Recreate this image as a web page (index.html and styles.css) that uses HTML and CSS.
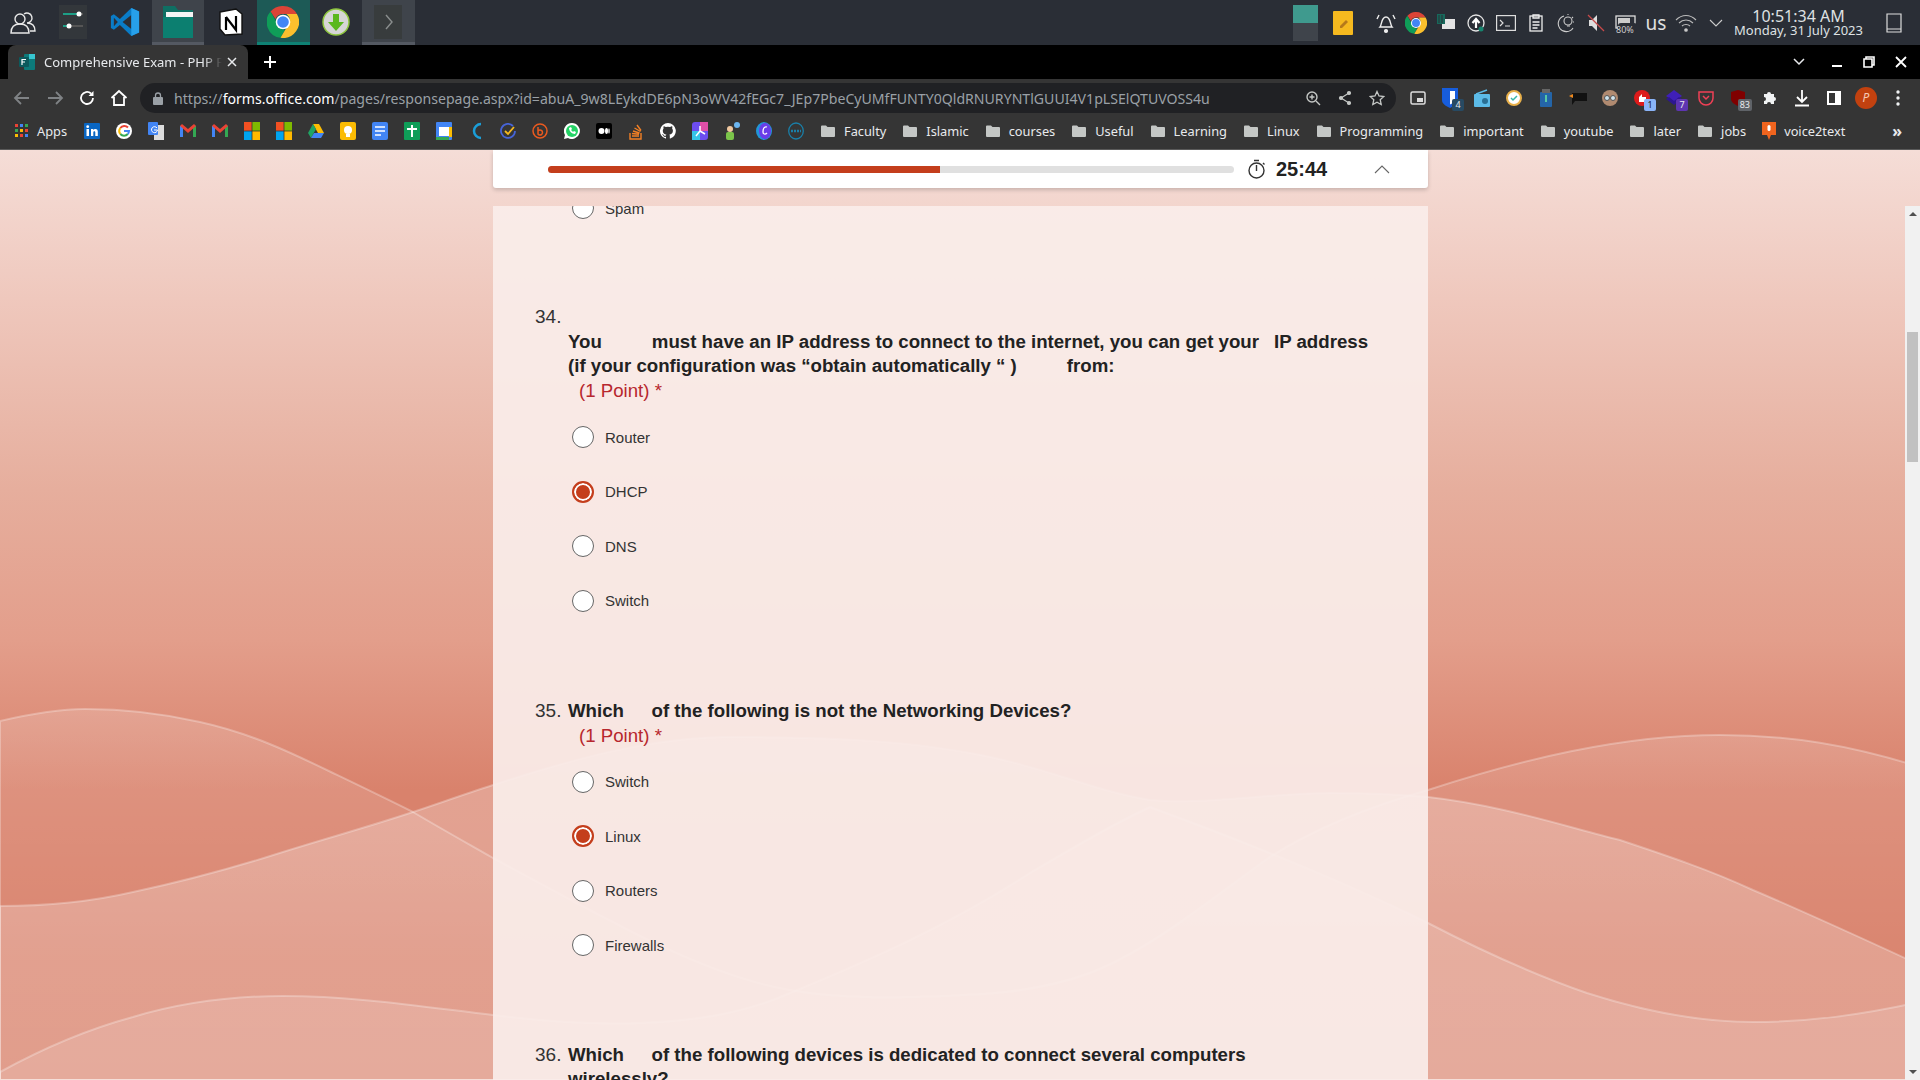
FILE: index.html
```html
<!DOCTYPE html>
<html lang="en">
<head>
    <meta charset="UTF-8">
    <title>Comprehensive Exam - PHP Forms</title>
    <link rel="stylesheet" href="styles.css">
</head>
<body>
    <svg class="defs" width="0" height="0">
        <symbol id="folder" viewBox="0 0 16 16"><path d="M1 3.5a1 1 0 0 1 1-1h4l1.5 1.5H14a1 1 0 0 1 1 1v8a1 1 0 0 1-1 1H2a1 1 0 0 1-1-1z" fill="#c4c7c5"/></symbol>
    </svg>

    <!-- desktop panel -->
    <div class="panel">
        <div class="launcher">
            <div class="task task-first"><svg width="28" height="28" viewBox="0 0 28 28" fill="none" stroke="#e8e8e8" stroke-width="1.4"><circle cx="11" cy="11" r="5"/><path d="M2 25c0-7 4-9 9-9s9 2 9 9z"/><path d="M15 6a5 5 0 1 1 3 9c4 0 8 2 8 8h-5"/></svg></div>
            <div class="task"><svg width="28" height="34" viewBox="0 0 28 34"><rect width="28" height="34" fill="#33373b"/><path d="M4 9h20M4 21h20" stroke="#555" stroke-width="2"/><path d="M4 9h14M4 21h6" stroke="#1d9e86" stroke-width="2"/><circle cx="20" cy="9" r="2.5" fill="#fff"/><circle cx="10" cy="21" r="2.5" fill="#fff"/></svg></div>
            <div class="task"><svg width="30" height="34" viewBox="0 0 100 100"><path d="M71 3 33 40 13 24 3 30v40l10 6 20-16 38 37 26-12V15z" fill="#0a7cc7"/><path d="M71 27 42 50l29 23z" fill="#2c2f36"/><path d="M71 3l26 12v70L71 97z" fill="#27a0ea"/><path d="M13 36 26 50 13 64z" fill="#2c2f36"/></svg></div>
            <div class="task task-on"><svg width="30" height="32" viewBox="0 0 30 32"><path d="M0 0h12l3 4h15v28H0z" fill="#0f6f63"/><rect x="3" y="6" width="27" height="5" fill="#f4f4f4"/><rect y="11" width="30" height="21" fill="#0c7f70"/></svg></div>
            <div class="task"><svg width="26" height="28" viewBox="0 0 26 28"><path d="M2 4 18 1l6 5v20L7 27 2 21z" fill="#fff" stroke="#111" stroke-width="1.4"/><path d="M8 9v13M8 9l10 13V8" fill="none" stroke="#000" stroke-width="2.2"/></svg></div>
            <div class="task task-chrome"><svg width="32" height="32" viewBox="0 0 32 32"><use href="#chrome-logo"/></svg></div>
            <div class="task"><svg width="28" height="28" viewBox="0 0 28 28"><circle cx="14" cy="14" r="13" fill="#d6d6d6" stroke="#8ec63f" stroke-width="1.5"/><path d="M11 6h6v8h5l-8 9-8-9h5z" fill="#5ab81d"/></svg></div>
            <div class="task task-on"><svg width="28" height="34" viewBox="0 0 28 34"><rect width="28" height="34" fill="#383c3d"/><path d="M12 10l6 7-6 7" fill="none" stroke="#8a8e8e" stroke-width="1.4"/></svg></div>
        </div>
        <div class="tray">
            <div class="pager"><span class="pager-on"></span><span></span></div>
            <svg class="tray-note" width="20" height="24" viewBox="0 0 20 24"><rect width="20" height="24" rx="1" fill="#f5b91f"/><path d="M7 15l6-6 2 2-6 6H7z" fill="#b5791a"/></svg>
            <div class="tray-slot"><svg width="20" height="22" viewBox="0 0 20 22" fill="none" stroke="#eee" stroke-width="1.4"><path d="M4 15c2-2 1-10 6-10s4 8 6 10z"/><circle cx="10" cy="19" r="1.4" fill="#eee"/><path d="M3 3 1 7M17 3l2 4"/></svg></div>
            <div class="tray-slot"><svg width="22" height="22" viewBox="0 0 32 32"><use href="#chrome-logo"/></svg></div>
            <div class="tray-slot"><svg width="18" height="18" viewBox="0 0 18 18"><rect x="5" y="5" width="13" height="10" fill="#e4e4e4"/><rect width="8" height="10" fill="#17685b"/><path d="M2 1v8M5 1v8" stroke="#2a2e36"/></svg></div>
            <div class="tray-slot"><svg width="18" height="20" viewBox="0 0 18 20" fill="none"><circle cx="9" cy="10" r="8" stroke="#e4e4e4" stroke-width="1.3"/><path d="M9 15V7M5.5 10 9 6l3.500 4" stroke="#fff" stroke-width="2.200"/><circle cx="14" cy="16" r="2.500" fill="#17856f"/></svg></div>
            <div class="tray-slot"><svg width="20" height="16" viewBox="0 0 20 16" fill="none" stroke="#ddd" stroke-width="1.200"><rect x=".6" y=".6" width="18.800" height="14.800"/><path d="M4 5l3 3-3 3M9 11h5"/></svg></div>
            <div class="tray-slot"><svg width="14" height="18" viewBox="0 0 14 18" fill="none" stroke="#eee" stroke-width="1.300"><rect x="1" y="2" width="12" height="15"/><path d="M4 1h6v3H4zM3.500 8h7M3.500 11h7M3.500 14h5"/></svg></div>
            <div class="tray-slot"><svg width="18" height="20" viewBox="0 0 18 20" fill="none" stroke="#ccc" stroke-width="1.100"><path d="M7 3a8 8 0 1 0 9 12"/><circle cx="11" cy="8" r="4"/><path d="M10 13h3M11 1v1M16 4l-1 1M17 9h-1"/></svg></div>
            <div class="tray-slot"><svg width="18" height="20" viewBox="0 0 18 20"><path d="M2 7h3l5-5v16l-5-5H2z" fill="#ddd"/><path d="M1 2l16 16" stroke="#c74a4a" stroke-width="1.200"/></svg></div>
            <div class="tray-slot"><svg width="22" height="20" viewBox="0 0 22 20" fill="none"><rect x="1" y="3" width="19" height="12" stroke="#ddd" stroke-width="1.300"/><rect x="3" y="5" width="12" height="8" fill="#ccc"/><rect x="3" y="10" width="19" height="9" rx="3" fill="#2a2e36"/></svg><span class="tray-battery">80%</span></div>
            <span class="tray-lang">us</span>
            <div class="tray-slot"><svg width="22" height="20" viewBox="0 0 22 20" fill="none" stroke="#bbb" stroke-width="1.100"><path d="M1 7c6-6 14-6 20 0M4 10c4-4 10-4 14 0M7 13c2-2 6-2 8 0"/><circle cx="11" cy="17" r="1.300" fill="#ddd"/></svg></div>
            <div class="tray-slot"><svg width="14" height="8" viewBox="0 0 14 8" fill="none" stroke="#ccc" stroke-width="1.100"><path d="M1 1l6 6 6-6"/></svg></div>
            <div class="clock"><span class="clock-time">10:51:34 AM</span><span class="clock-date">Monday, 31 July 2023</span></div>
            <svg class="tray-desk" width="16" height="20" viewBox="0 0 16 20" fill="none" stroke="#ddd" stroke-width="1.200"><path d="M1 1h14v18H1zM1 16h14"/></svg>
        </div>
    </div>

    <!-- tab strip -->
    <div class="tabstrip">
        <div class="tab">
            <svg width="16" height="16" viewBox="0 0 16 16"><rect x="5" width="11" height="16" rx="1" fill="#0d7a7a"/><rect x="10" width="6" height="5" fill="#37c6d0"/><rect y="3" width="10" height="10" rx="1" fill="#0b5a5d"/><path d="M3 11V5.500h4M3 8h3" stroke="#fff" stroke-width="1.200" fill="none"/></svg>
            <span class="tab-title">Comprehensive Exam - PHP Forms</span>
            <svg class="tab-close" width="10" height="10" viewBox="0 0 10 10" stroke="#e8eaed" stroke-width="1.500"><path d="M1 1l8 8M9 1 1 9"/></svg>
        </div>
        <svg class="tab-new" width="14" height="14" viewBox="0 0 14 14" stroke="#fff" stroke-width="2"><path d="M7 1v12M1 7h12"/></svg>
        <div class="window-btns">
            <svg class="tab-list" width="12" height="8" viewBox="0 0 12 8" fill="none" stroke="#e8eaed" stroke-width="1.500"><path d="M1 1l5 5 5-5"/></svg>
            <svg width="12" height="12" viewBox="0 0 12 12" stroke="#fff" stroke-width="2"><path d="M1 10h10"/></svg>
            <svg width="12" height="12" viewBox="0 0 12 12" fill="none" stroke="#fff" stroke-width="1.600"><path d="M3 3V1h8v8H9M1 3h8v8H1z"/></svg>
            <svg width="12" height="12" viewBox="0 0 12 12" stroke="#fff" stroke-width="1.800"><path d="M1 1l10 10M11 1 1 11"/></svg>
        </div>
    </div>

    <!-- address bar -->
    <div class="toolbar">
        <div class="nav-btns">
            <svg width="18" height="16" viewBox="0 0 18 16" fill="none" stroke="#7f8285" stroke-width="1.800"><path d="M16 8H2M8 2 2 8l6 6"/></svg>
            <svg width="18" height="16" viewBox="0 0 18 16" fill="none" stroke="#7f8285" stroke-width="1.800"><path d="M2 8h14M10 2l6 6-6 6"/></svg>
            <svg width="16" height="16" viewBox="0 0 16 16" fill="none" stroke="#fff" stroke-width="1.800"><path d="M14 8a6 6 0 1 1-2-4.500"/><path d="M14.500 1v5h-5z" fill="#fff" stroke="none"/></svg>
            <svg width="18" height="18" viewBox="0 0 18 18" fill="none" stroke="#fff" stroke-width="1.800"><path d="M1.500 9 9 2l7.500 7M4 8v8h10V8"/></svg>
        </div>
        <div class="omnibox">
            <svg width="10" height="13" viewBox="0 0 10 13"><rect y="5" width="10" height="8" rx="1" fill="#9aa0a6"/><path d="M2.500 5V3.500a2.500 2.500 0 0 1 5 0V5" fill="none" stroke="#9aa0a6" stroke-width="1.300"/></svg>
            <div class="url"><span>https://</span><b>forms.office.com</b><span>/pages/responsepage.aspx?id=abuA_9w8LEykdDE6pN3oWV42fEGc7_JEp7PbeCyUMfFUNTY0QldRNURYNTlGUUI4V1pLSElQTUVOSS4u</span></div>
            <div class="omni-btns">
                <svg width="16" height="16" viewBox="0 0 16 16" fill="none" stroke="#c4c7c5" stroke-width="1.400"><circle cx="7" cy="7" r="5"/><path d="M11 11l4 4M7 4.500v5M4.500 7h5"/></svg>
                <svg width="14" height="16" viewBox="0 0 14 16" fill="#c4c7c5" stroke="#c4c7c5" stroke-width="1.200"><path d="M11 3 3 8l8 5" fill="none"/><circle cx="11" cy="3" r="1.500"/><circle cx="3" cy="8" r="1.500"/><circle cx="11" cy="13" r="1.500"/></svg>
                <svg width="16" height="16" viewBox="0 0 16 16" fill="none" stroke="#c4c7c5" stroke-width="1.300"><path d="M8 1.500l2 4.500 4.800.5-3.600 3.200 1 4.800L8 12.200 3.800 14.500l1-4.800L1.200 6.500 6 6z"/></svg>
            </div>
        </div>
        <div class="ext-btns">
            <div class="ext"><svg width="16" height="14" viewBox="0 0 16 14"><rect x="1" y="1" width="14" height="12" rx="1.500" fill="none" stroke="#ddd" stroke-width="1.500"/><rect x="7" y="7" width="6" height="4" fill="#ddd"/></svg></div>
            <div class="ext"><svg width="16" height="20" viewBox="0 0 16 20"><path d="M0 0h16v12c0 4-4 6-8 8-4-2-8-4-8-8z" fill="#175ddc"/><path d="M8 3h5v9c0 2-2 3-5 4.500z" fill="#fff"/></svg><span class="badge badge-teal">4</span></div>
            <div class="ext"><svg width="16" height="18" viewBox="0 0 16 18"><rect y="5" width="16" height="13" rx="1" fill="#5cbbe8"/><path d="M2 5l11-4" stroke="#5cbbe8" stroke-width="1.500"/><circle cx="11" cy="12" r="3" fill="#2a6f94"/></svg></div>
            <div class="ext"><svg width="16" height="16" viewBox="0 0 16 16" fill="none"><circle cx="8" cy="8" r="7" fill="#fff" stroke="#e8b04a" stroke-width="2"/><path d="M5 8l2 2 4-4" stroke="#38b6a8" stroke-width="1.500"/></svg></div>
            <div class="ext"><svg width="12" height="18" viewBox="0 0 12 18"><rect y="3" width="12" height="15" rx="1" fill="#2465a8"/><rect x="2" width="8" height="4" fill="#666"/><path d="M6 6v7" stroke="#57c7a5" stroke-width="2"/></svg></div>
            <div class="ext"><svg width="18" height="16" viewBox="0 0 18 16"><path d="M3 3h15v8H6l-3 4z" fill="#111"/><path d="M0 6l4-2v4z" fill="#f08a1d"/></svg></div>
            <div class="ext"><svg width="16" height="16" viewBox="0 0 16 16"><circle cx="8" cy="8" r="8" fill="#b08a70"/><circle cx="5" cy="8" r="2.500" fill="#cfe3ec" stroke="#555"/><circle cx="11" cy="8" r="2.500" fill="#cfe3ec" stroke="#555"/></svg></div>
            <div class="ext"><svg width="16" height="16" viewBox="0 0 16 16"><circle cx="8" cy="8" r="8" fill="#dd1b1b"/><path d="M5 12V7l3-3v3h4v5z" fill="#fff"/></svg><span class="badge badge-blue">1</span></div>
            <div class="ext"><svg width="16" height="16" viewBox="0 0 16 16"><path d="M8 0l8 6-8 6-8-6z" fill="#3f1fb8"/><path d="M0 9l8 6 8-6-3-2-5 4-5-4z" fill="#2d1690"/></svg><span class="badge badge-purple">7</span></div>
            <div class="ext"><svg width="16" height="16" viewBox="0 0 16 16" fill="none" stroke="#ef4056" stroke-width="1.500"><path d="M1 2h14v6a7 7 0 0 1-14 0z"/><path d="M5 6l3 3 3-3"/></svg></div>
            <div class="ext"><svg width="14" height="16" viewBox="0 0 14 16"><path d="M0 2l7-2 7 2v7c0 3-3 5-7 7-4-2-7-4-7-7z" fill="#800000"/></svg><span class="badge badge-grey">83</span></div>
            <div class="ext"><svg width="16" height="16" viewBox="0 0 16 16" fill="#f1f3f4"><path d="M2 4h3a2 2 0 1 1 4 0h3v3a2 2 0 1 1 0 4v3H9a2 2 0 1 0-4 0H2v-3a2 2 0 1 0 0-4z"/></svg></div>
            <div class="ext"><svg width="16" height="18" viewBox="0 0 16 18" fill="none" stroke="#fff" stroke-width="1.800"><path d="M8 1v11M3 8l5 5 5-5M1 16.500h14"/></svg></div>
            <div class="ext"><svg width="14" height="14" viewBox="0 0 14 14"><rect x="1" y="1" width="12" height="12" fill="none" stroke="#fff" stroke-width="2"/><rect x="8" y="1" width="5" height="12" fill="#fff"/></svg></div>
            <div class="ext"><span class="avatar">P</span></div>
            <div class="ext"><svg width="4" height="16" viewBox="0 0 4 16" fill="#f1f3f4"><circle cx="2" cy="2" r="1.700"/><circle cx="2" cy="8" r="1.700"/><circle cx="2" cy="14" r="1.700"/></svg></div>
        </div>
    </div>

    <!-- bookmarks -->
    <div class="bookmarks">
        <div class="mark mark-apps">
            <svg width="14" height="14" viewBox="0 0 14 14"><path d="M0 0h3v3H0z" fill="#ea4335"/><path d="M5 0h3v3H5z" fill="#4285f4"/><path d="M10 0h3v3h-3z" fill="#34a853"/><path d="M0 5h3v3H0z" fill="#34a853"/><path d="M5 5h3v3H5z" fill="#fbbc04"/><path d="M10 5h3v3h-3z" fill="#ea4335"/><path d="M0 10h3v3H0z" fill="#fbbc04"/><path d="M5 10h3v3H5z" fill="#ea4335"/><path d="M10 10h3v3h-3z" fill="#4285f4"/></svg>
            <span>Apps</span>
        </div>
        <div class="favs">
            <svg width="16" height="16" viewBox="0 0 16 16"><rect width="16" height="16" rx="1" fill="#0a66c2"/><rect x="2.500" y="6" width="2.500" height="7" fill="#fff"/><circle cx="3.700" cy="3.700" r="1.400" fill="#fff"/><path d="M7 6h2.300v1c1-1.500 4.500-1.800 4.500 1.500V13h-2.500V9.500c0-1.800-2-1.500-2 0V13H7z" fill="#fff"/></svg>
            <svg width="16" height="16" viewBox="0 0 16 16" fill="none" stroke-width="3"><circle cx="8" cy="8" r="8" fill="#fff" stroke="none"/><path d="M12 4.500A5 5 0 0 0 4.300 5" stroke="#ea4335" stroke-width="2"/><path d="M4.300 5a5 5 0 0 0 0 6" stroke="#fbbc04" stroke-width="2"/><path d="M4.300 11a5 5 0 0 0 7.500 0" stroke="#34a853" stroke-width="2"/><path d="M8 8h5a5 5 0 0 1-1.200 3" stroke="#4285f4" stroke-width="2"/></svg>
            <svg width="16" height="18" viewBox="0 0 16 18"><rect x="6" y="3" width="10" height="15" fill="#ddd"/><rect width="10" height="13" rx="1" fill="#4285f4"/><path d="M9 6a3 3 0 1 0 .5 2H6" fill="none" stroke="#fff"/></svg>
            <svg width="16" height="13" viewBox="0 0 16 13"><path d="M0 13V2l3-1v12z" fill="#4285f4"/><path d="M13 13V1l3 1v11z" fill="#34a853"/><path d="M0 2l2-2 6 5 6-5 2 2-8 7z" fill="#ea4335"/></svg>
            <svg width="16" height="13" viewBox="0 0 16 13"><path d="M0 13V2l3-1v12z" fill="#4285f4"/><path d="M13 13V1l3 1v11z" fill="#34a853"/><path d="M0 2l2-2 6 5 6-5 2 2-8 7z" fill="#ea4335"/></svg>
            <svg width="16" height="18" viewBox="0 0 16 18"><use href="#ms-logo"/></svg>
            <svg width="16" height="18" viewBox="0 0 16 18"><use href="#ms-logo"/></svg>
            <svg width="16" height="14" viewBox="0 0 16 14"><path d="M5 0h6l5 9h-6z" fill="#fbbc04"/><path d="M5 0 0 9l3 5 5-9z" fill="#1fa463"/><path d="M3 14h10l3-5H6z" fill="#4285f4"/></svg>
            <svg width="16" height="18" viewBox="0 0 16 18"><rect width="16" height="18" rx="2" fill="#fbbc04"/><circle cx="8" cy="8" r="4" fill="#fff"/><rect x="6" y="12" width="4" height="3" fill="#fff"/></svg>
            <svg width="16" height="18" viewBox="0 0 16 18"><rect width="16" height="18" rx="2" fill="#4285f4"/><path d="M3 5h10M3 9h10M3 13h6" stroke="#fff" stroke-width="1.700"/></svg>
            <svg width="16" height="18" viewBox="0 0 16 18"><rect width="16" height="18" rx="1" fill="#0f9d58"/><path d="M8 3v12M3 7h10" stroke="#fff" stroke-width="2"/></svg>
            <svg width="16" height="18" viewBox="0 0 16 18"><rect width="16" height="18" rx="1" fill="#4285f4"/><rect x="3" y="5" width="10" height="9" fill="#fff"/><path d="M0 15h13v3H0z" fill="#34a853"/><path d="M13 5h3v10h-3z" fill="#fbbc04"/></svg>
            <svg width="16" height="18" viewBox="0 0 16 18" fill="none" stroke="#1b9ed8" stroke-width="2.500"><path d="M13 2a7 7 0 0 0 0 14"/></svg>
            <svg width="16" height="16" viewBox="0 0 16 16" fill="none"><path d="M13 3a7 7 0 1 0 2 5" stroke="#4664d8" stroke-width="1.800"/><path d="M5 8l3 3 6-7" stroke="#f5b91f" stroke-width="1.800"/></svg>
            <svg width="16" height="16" viewBox="0 0 16 16" fill="none" stroke="#ea5a1f" stroke-width="1.500"><circle cx="8" cy="8" r="7"/><path d="M6 4v7a2.500 2.500 0 1 0 0-3"/></svg>
            <svg width="16" height="16" viewBox="0 0 16 16"><path d="M8 0a8 8 0 0 0-7 12L0 16l4-1a8 8 0 1 0 4-15z" fill="#fff"/><circle cx="8" cy="8" r="6" fill="#25d366"/><path d="M5 5c0 3 3 6 6 6l1-2-2-1-1 1-2-2 1-1-1-2z" fill="#fff"/></svg>
            <svg width="16" height="16" viewBox="0 0 16 16"><rect width="16" height="16" rx="2" fill="#000"/><ellipse cx="5.500" cy="8" rx="3" ry="3" fill="#fff"/><ellipse cx="10.500" cy="8" rx="1.500" ry="3" fill="#fff"/><ellipse cx="13" cy="8" rx=".7" ry="2.700" fill="#fff"/></svg>
            <svg width="16" height="18" viewBox="0 0 16 18" fill="none" stroke="#f48024" stroke-width="1.400"><path d="M2 11v6h11v-6M4 14h7M4 11.500l7 .7M5 9l6.500 2M6.500 6l6 3.500M9 3l4 5.500"/></svg>
            <svg width="16" height="16" viewBox="0 0 16 16"><path d="M8 0a8 8 0 0 0-2.500 15.600c.4 0 .5-.2.500-.4v-1.400c-2.200.5-2.700-1-2.700-1-.4-.9-.9-1.200-.9-1.200-.7-.5 0-.5 0-.5.800.1 1.200.8 1.200.8.700 1.200 1.900.9 2.300.7 0-.5.300-.9.500-1.100-1.800-.2-3.600-.9-3.600-4 0-.9.300-1.600.8-2.100 0-.2-.4-1 .1-2.100 0 0 .7-.2 2.200.8a7.600 7.600 0 0 1 4 0c1.500-1 2.200-.8 2.200-.8.500 1.100.1 1.900 0 2.100.5.500.8 1.200.8 2.100 0 3.100-1.800 3.800-3.600 4 .3.200.5.700.5 1.500v2.200c0 .2.100.5.500.4A8 8 0 0 0 8 0z" fill="#fff"/></svg>
            <svg width="16" height="18" viewBox="0 0 16 18"><rect width="16" height="18" rx="3" fill="#6d4df0"/><rect x="8" width="8" height="9" fill="#e04fa8"/><rect y="9" width="8" height="9" fill="#35c4e8"/><path d="M8 4v5l-4 5M8 9l5 3" stroke="#fff" stroke-width="1.500" fill="none"/></svg>
            <svg width="16" height="18" viewBox="0 0 16 18"><circle cx="6" cy="7" r="3" fill="#f0c8a0"/><rect x="2" y="10" width="8" height="8" rx="2" fill="#7cc44a"/><circle cx="13" cy="3" r="3" fill="#6cb6f0"/></svg>
            <svg width="16" height="18" viewBox="0 0 16 18"><ellipse cx="8" cy="9" rx="8" ry="9" fill="#2196d8"/><ellipse cx="9" cy="9" rx="6" ry="8" fill="#6a3de8"/><path d="M11 5c-3-1-4 2-4 5 0 2 2 3 4 1" fill="none" stroke="#fff" stroke-width="1.300"/></svg>
            <svg width="16" height="18" viewBox="0 0 16 18"><ellipse cx="8" cy="9" rx="7.300" ry="8" fill="none" stroke="#1a7fa8" stroke-width="1.300"/><path d="M3 9h10" stroke="#1a7fa8" stroke-width="2.500" stroke-dasharray="2 1"/></svg>
        </div>
        <div class="folders">
            <div class="mark"><svg width="16" height="16"><use href="#folder"/></svg>Faculty</div>
            <div class="mark"><svg width="16" height="16"><use href="#folder"/></svg>Islamic</div>
            <div class="mark"><svg width="16" height="16"><use href="#folder"/></svg>courses</div>
            <div class="mark"><svg width="16" height="16"><use href="#folder"/></svg>Useful</div>
            <div class="mark"><svg width="16" height="16"><use href="#folder"/></svg>Learning</div>
            <div class="mark"><svg width="16" height="16"><use href="#folder"/></svg>Linux</div>
            <div class="mark"><svg width="16" height="16"><use href="#folder"/></svg>Programming</div>
            <div class="mark"><svg width="16" height="16"><use href="#folder"/></svg>important</div>
            <div class="mark"><svg width="16" height="16"><use href="#folder"/></svg>youtube</div>
            <div class="mark"><svg width="16" height="16"><use href="#folder"/></svg>later</div>
            <div class="mark"><svg width="16" height="16"><use href="#folder"/></svg>jobs</div>
            <div class="mark"><svg width="14" height="18" viewBox="0 0 14 18"><path d="M0 0h14v13H9l-2 5-2-5H0z" fill="#f0641e"/><rect x="5.500" y="3" width="3" height="6" rx="1.500" fill="#fff"/></svg>voice2text</div>
        </div>
        <span class="more">»</span>
    </div>

    <svg class="defs" width="0" height="0">
        <symbol id="chrome-logo" viewBox="0 0 32 32">
            <path d="M16 0a16 16 0 0 1 13.900 8H16a8 8 0 0 0-7.500 5L3.500 5.500A16 16 0 0 1 16 0z" fill="#db4437"/>
            <path d="M3.500 5.500 10.500 18a8 8 0 0 0 7.500 5.800L13.500 31.800A16 16 0 0 1 3.500 5.500z" fill="#0f9d58"/>
            <path d="M29.900 8A16 16 0 0 1 13.500 31.800L20.500 20a8 8 0 0 0-1-12z" fill="#fbc02d"/>
            <circle cx="16" cy="16" r="7.300" fill="#fff"/><circle cx="16" cy="16" r="5.800" fill="#4285f4"/>
        </symbol>
        <symbol id="ms-logo" viewBox="0 0 16 18">
            <rect width="7.600" height="8.600" fill="#f25022"/><rect x="8.400" width="7.600" height="8.600" fill="#7fba00"/>
            <rect y="9.400" width="7.600" height="8.600" fill="#00a4ef"/><rect x="8.400" y="9.400" width="7.600" height="8.600" fill="#ffb900"/>
        </symbol>
    </svg>

    <!-- page -->
    <div class="page">
        <svg class="waves" viewBox="0 150 1920 930" preserveAspectRatio="none">
            <defs>
                <linearGradient id="layer1" gradientUnits="userSpaceOnUse" x1="0" y1="710" x2="0" y2="950">
                    <stop offset="0" stop-color="#fff" stop-opacity=".17"/>
                    <stop offset="1" stop-color="#fff" stop-opacity=".03"/>
                </linearGradient>
                <linearGradient id="layer2" gradientUnits="userSpaceOnUse" x1="0" y1="790" x2="0" y2="1080">
                    <stop offset="0" stop-color="#fff" stop-opacity=".26"/>
                    <stop offset="1" stop-color="#fff" stop-opacity=".19"/>
                </linearGradient>
            </defs>
            <path class="wave" fill="url(#layer1)" d="M0 721C30 714 60 709 85 709 125 709 165 714 200 722 250 733 290 752 333 773 360 786 385 798 413 812 440 828 465 842 493 858 600 915 700 975 790 990 830 997 870 998 910 997 970 995 1030 995 1090 973 1150 950 1210 900 1270 857 1320 825 1375 805 1428 790 1520 760 1620 735 1720 735 1790 735 1850 745 1920 767V1080H0z"/>
            <path class="wave" fill="url(#layer2)" d="M0 906C45 906 90 902 133 892 180 882 225 870 267 857 320 840 365 828 413 812 440 803 465 794 493 785 570 760 650 737 730 737 820 737 900 740 970 753 1040 765 1090 790 1150 800 1210 805 1270 793 1330 793 1365 793 1395 794 1428 797 1500 805 1560 825 1620 840 1665 855 1710 870 1753 890 1805 912 1855 935 1920 965V1080H0z"/>
            <path class="wave" fill="#fff" fill-opacity=".14" d="M0 1072C40 1050 85 1030 133 1017 180 1003 230 996 283 996 355 996 425 1007 493 1015 540 1021 590 1025 640 1023 690 1021 740 1015 790 993 870 960 950 925 1030 873 1070 850 1110 825 1150 807 1240 840 1340 880 1428 923 1480 950 1535 975 1587 993 1640 1010 1695 1022 1753 1022 1810 1022 1860 1015 1920 1002V1080H0z"/>
        </svg>

        <div class="form">
            <div class="progress-card">
                <div class="progress"><div class="progress-fill"></div></div>
                <svg width="18" height="20" viewBox="0 0 18 20" fill="none" stroke="#333" stroke-width="1.400"><circle cx="8.500" cy="11.500" r="7.500"/><path d="M6 1.500h5M8.500 6v6M15 4l1.500 1.500"/></svg>
                <span class="timer">25:44</span>
                <svg class="collapse" width="16" height="9" viewBox="0 0 16 9" fill="none" stroke="#666" stroke-width="1.100"><path d="M1 8l7-7 7 7"/></svg>
            </div>

            <div class="questions">
                <div class="option option-cut"><span class="radio"></span>Spam</div>

                <div class="question question-34">
                    <div class="q-num">34.</div>
                    <div class="q-body">
                        <div class="q-title">You<span class="gap-wide"></span>must have an IP address to connect to the internet, you can get your<span class="gap-narrow"></span>IP address (if your configuration was “obtain automatically “ )<span class="gap-wide"></span>from:</div>
                        <div class="q-point">(1 Point) *</div>
                        <div class="options">
                            <div class="option"><span class="radio"></span>Router</div>
                            <div class="option"><span class="radio radio-on"></span>DHCP</div>
                            <div class="option"><span class="radio"></span>DNS</div>
                            <div class="option"><span class="radio"></span>Switch</div>
                        </div>
                    </div>
                </div>

                <div class="question question-inline">
                    <div class="q-num">35.</div>
                    <div class="q-body">
                        <div class="q-title">Which<span class="gap-mid"></span>of the following is not the Networking Devices?</div>
                        <div class="q-point">(1 Point) *</div>
                        <div class="options">
                            <div class="option"><span class="radio"></span>Switch</div>
                            <div class="option"><span class="radio radio-on"></span>Linux</div>
                            <div class="option"><span class="radio"></span>Routers</div>
                            <div class="option"><span class="radio"></span>Firewalls</div>
                        </div>
                    </div>
                </div>

                <div class="question question-inline">
                    <div class="q-num">36.</div>
                    <div class="q-body">
                        <div class="q-title">Which<span class="gap-mid"></span>of the following devices is dedicated to connect several computers<br>wirelessly?</div>
                    </div>
                </div>
            </div>
        </div>

        <div class="scrollbar">
            <span class="arrow-up"></span>
            <div class="thumb"></div>
            <span class="arrow-down"></span>
        </div>
    </div>
</body>
</html>
```

FILE: styles.css
```css
* {
    box-sizing: border-box;
}

html, body {
    height: 100%;
}

body {
    margin: 0;
    height: 1080px;
    overflow: hidden;
    display: flex;
    flex-direction: column;
    font-family: "Liberation Sans", Arial, sans-serif;
    background-color: #2a2e36;
}

.defs {
    display: none;
}

/* desktop panel */
.panel {
    height: 45px;
    flex-shrink: 0;
    display: flex;
    justify-content: space-between;
    background-color: #2a2e36;
}

.launcher {
    display: flex;
    margin-left: -6px;
}

.task {
    width: 52.6px;
    height: 45px;
    display: flex;
    align-items: center;
    justify-content: center;
    padding-top: 2px;
    border-bottom: 3px solid transparent;
}

.task svg {
    display: block;
}

.task-first {
    padding-left: 5px;
}

.task-on {
    background-color: #3f444b;
    border-bottom-color: #545962;
}

.task-chrome {
    background-color: #1d5a56;
    border-bottom-color: #0e8174;
}

.tray {
    display: flex;
    align-items: center;
    padding-right: 18px;
}

.pager {
    width: 25px;
    height: 36px;
    display: flex;
    flex-direction: column;
    margin-right: 15px;
}

.pager span {
    flex: 1;
    background-color: #3f444b;
}

.pager .pager-on {
    background-color: #3f9a8e;
}

.tray-note {
    margin-right: 18px;
}

.tray-slot {
    position: relative;
    width: 30px;
    height: 45px;
    display: flex;
    align-items: center;
    justify-content: center;
    flex-shrink: 0;
}

.tray-battery {
    position: absolute;
    left: 5px;
    top: 24px;
    font-family: "Noto Sans", sans-serif;
    font-size: 9px;
    line-height: 11px;
    color: #ccc;
}

.tray-lang {
    width: 30px;
    text-align: center;
    font-family: "Noto Sans", sans-serif;
    font-size: 19px;
    color: #e0e0e0;
}

.clock {
    width: 135px;
    margin-right: 20px;
    display: flex;
    flex-direction: column;
    align-items: center;
    font-family: "Noto Sans", sans-serif;
    color: #dfe1e3;
    line-height: 12px;
}

.clock-time {
    font-size: 16px;
    line-height: 15px;
}

.clock-date {
    font-size: 13px;
}

/* tabs */
.tabstrip {
    height: 34px;
    flex-shrink: 0;
    display: flex;
    align-items: center;
    background-color: #000;
    padding-left: 8px;
}

.tab {
    width: 240px;
    height: 34px;
    display: flex;
    align-items: center;
    gap: 9px;
    padding: 0 11px;
    background-color: #353535;
    border-radius: 8px 8px 0 0;
    color: #e8eaed;
    font-family: "Noto Sans", sans-serif;
    font-size: 13px;
}

.tab-title {
    width: 178px;
    flex-shrink: 0;
    white-space: nowrap;
    overflow: hidden;
    -webkit-mask-image: linear-gradient(to right, #000 90%, transparent);
    mask-image: linear-gradient(to right, #000 90%, transparent);
}

.tab-close {
    flex-shrink: 0;
    margin-left: -4px;
}

.tab-new {
    margin-left: 15px;
}

.window-btns {
    margin-left: auto;
    display: flex;
    align-items: center;
    gap: 20px;
    padding-right: 13px;
}

.tab-list {
    margin-right: 6px;
}

/* toolbar */
.toolbar {
    height: 34px;
    flex-shrink: 0;
    display: flex;
    padding-top: 4px;
    background-color: #353535;
}

.nav-btns {
    width: 140px;
    padding-left: 13px;
    display: flex;
    align-items: center;
    gap: 15px;
}

.omnibox {
    width: 1256px;
    height: 30px;
    display: flex;
    align-items: center;
    padding: 0 11px 0 13px;
    border-radius: 15px;
    background-color: #202124;
}

.url {
    margin-left: 11px;
    font-family: "Noto Sans", sans-serif;
    font-size: 14.12px;
    color: #9aa0a6;
    white-space: nowrap;
}

.url b {
    font-weight: 400;
    color: #fff;
}

.omni-btns {
    margin-left: auto;
    display: flex;
    align-items: center;
    gap: 17px;
}

.ext-btns {
    display: flex;
    margin-left: 6px;
}

.ext {
    position: relative;
    width: 32px;
    height: 30px;
    display: flex;
    align-items: center;
    justify-content: center;
}

.badge {
    position: absolute;
    right: 2px;
    bottom: 2px;
    min-width: 12px;
    height: 12px;
    padding: 0 2px;
    border-radius: 2px;
    font-family: "Noto Sans", sans-serif;
    font-size: 9px;
    line-height: 12px;
    text-align: center;
    color: #e8eaed;
}

.badge-teal {
    background-color: #274a63;
}

.badge-blue {
    background-color: #8ab4f8;
    color: #202124;
}

.badge-purple {
    background-color: #5e35b1;
}

.badge-grey {
    background-color: #5f6368;
}

.avatar {
    width: 22px;
    height: 22px;
    border-radius: 50%;
    background-color: #c2410f;
    color: #f6c9b5;
    font-family: "Noto Sans", sans-serif;
    font-size: 12px;
    font-style: italic;
    line-height: 22px;
    text-align: center;
}

/* bookmarks */
.bookmarks {
    height: 37px;
    flex-shrink: 0;
    display: flex;
    align-items: center;
    padding: 0 0 1px 15px;
    background-color: #353535;
    border-bottom: 1px solid #5a5a5a;
    color: #e8eaed;
    font-family: "Noto Sans", sans-serif;
    font-size: 12.8px;
}

.mark {
    display: flex;
    align-items: center;
    gap: 8px;
    white-space: nowrap;
}

.mark-apps {
    width: 69px;
}

.favs {
    display: flex;
    align-items: center;
    gap: 16px;
    margin-right: 16px;
}

.folders {
    display: flex;
    align-items: center;
    gap: 16px;
}

.more {
    margin-left: auto;
    padding-right: 18px;
    font-size: 16px;
    font-weight: 700;
}

/* page */
.page {
    position: relative;
    flex: 1;
    display: flex;
    overflow: hidden;
    background: linear-gradient(to bottom, #f5ddd7 0%, #efc8bd 16%, #e6ae9d 36.5%, #e39e8b 52.7%, #d9826c 68.8%, #d9826c 100%);
}

.waves {
    position: absolute;
    top: 0;
    left: 0;
    width: 100%;
    height: 100%;
}

.wave {
    stroke: #fff;
    stroke-opacity: 0.28;
    stroke-width: 2;
}

.form {
    position: relative;
    width: 935px;
    margin-left: 493px;
    display: flex;
    flex-direction: column;
}

.progress-card {
    height: 38px;
    flex-shrink: 0;
    display: flex;
    align-items: center;
    padding-left: 55px;
    background-color: #fff;
    border-radius: 0 0 3px 3px;
    box-shadow: 0 2px 4px rgba(0, 0, 0, 0.18);
    z-index: 1;
}

.progress {
    width: 686px;
    height: 7px;
    margin-right: 14px;
    border-radius: 4px;
    background-color: #e0e0e0;
    overflow: hidden;
}

.progress-fill {
    width: 392px;
    height: 100%;
    background-color: #c43e1c;
}

.timer {
    margin-left: 10px;
    font-size: 20px;
    font-weight: 700;
    color: #222;
}

.collapse {
    margin-left: 47px;
}

.questions {
    flex: 1;
    margin-top: 18px;
    overflow: hidden;
    background-color: rgba(250, 237, 233, 0.93);
    color: #222;
}

.option {
    height: 22px;
    display: flex;
    align-items: center;
    gap: 11px;
    font-size: 15px;
    color: #333;
}

.option-cut {
    margin: -9px 0 0 79px;
}

.radio {
    width: 22px;
    height: 22px;
    flex-shrink: 0;
    border: 1px solid #666;
    border-radius: 50%;
    background-color: #fff;
}

.radio-on {
    border: 2px solid #c43e1c;
    box-shadow: inset 0 0 0 2px #fff;
    background-color: #c43e1c;
}

.question {
    display: flex;
    padding-left: 42px;
}

.question-34 {
    flex-direction: column;
    margin-top: 86px;
}

.question-inline {
    margin-top: 87px;
}

.q-num {
    width: 33px;
    font-size: 19px;
    line-height: 23px;
    white-space: nowrap;
    color: #333;
}

.q-body {
    width: 820px;
}

.question-34 .q-body {
    margin: 2px 0 0 33px;
}

.q-title {
    font-size: 18.67px;
    font-weight: 700;
    line-height: 24px;
    color: #222;
}

.gap-wide, .gap-mid, .gap-narrow {
    display: inline-block;
}

.gap-wide {
    width: 50px;
}

.gap-mid {
    width: 27.6px;
}

.gap-narrow {
    width: 15px;
}

.q-point {
    margin-left: 11px;
    font-size: 18.67px;
    line-height: 25px;
    color: #b7272d;
}

.options {
    display: flex;
    flex-direction: column;
    gap: 32.5px;
    margin: 23px 0 0 4px;
}

.scrollbar {
    position: absolute;
    top: 56px;
    right: 0;
    bottom: 0;
    width: 15px;
    display: flex;
    flex-direction: column;
    align-items: center;
    background-color: #f1f1f1;
}

.thumb {
    width: 11px;
    height: 130px;
    margin-top: 116px;
    background-color: #c1c1c1;
}

.arrow-up, .arrow-down {
    width: 0;
    height: 0;
    border-left: 4px solid transparent;
    border-right: 4px solid transparent;
}

.arrow-up {
    margin-top: 6px;
    border-bottom: 4px solid #505050;
}

.arrow-down {
    margin-top: auto;
    margin-bottom: 6px;
    border-top: 4px solid #505050;
}
```
